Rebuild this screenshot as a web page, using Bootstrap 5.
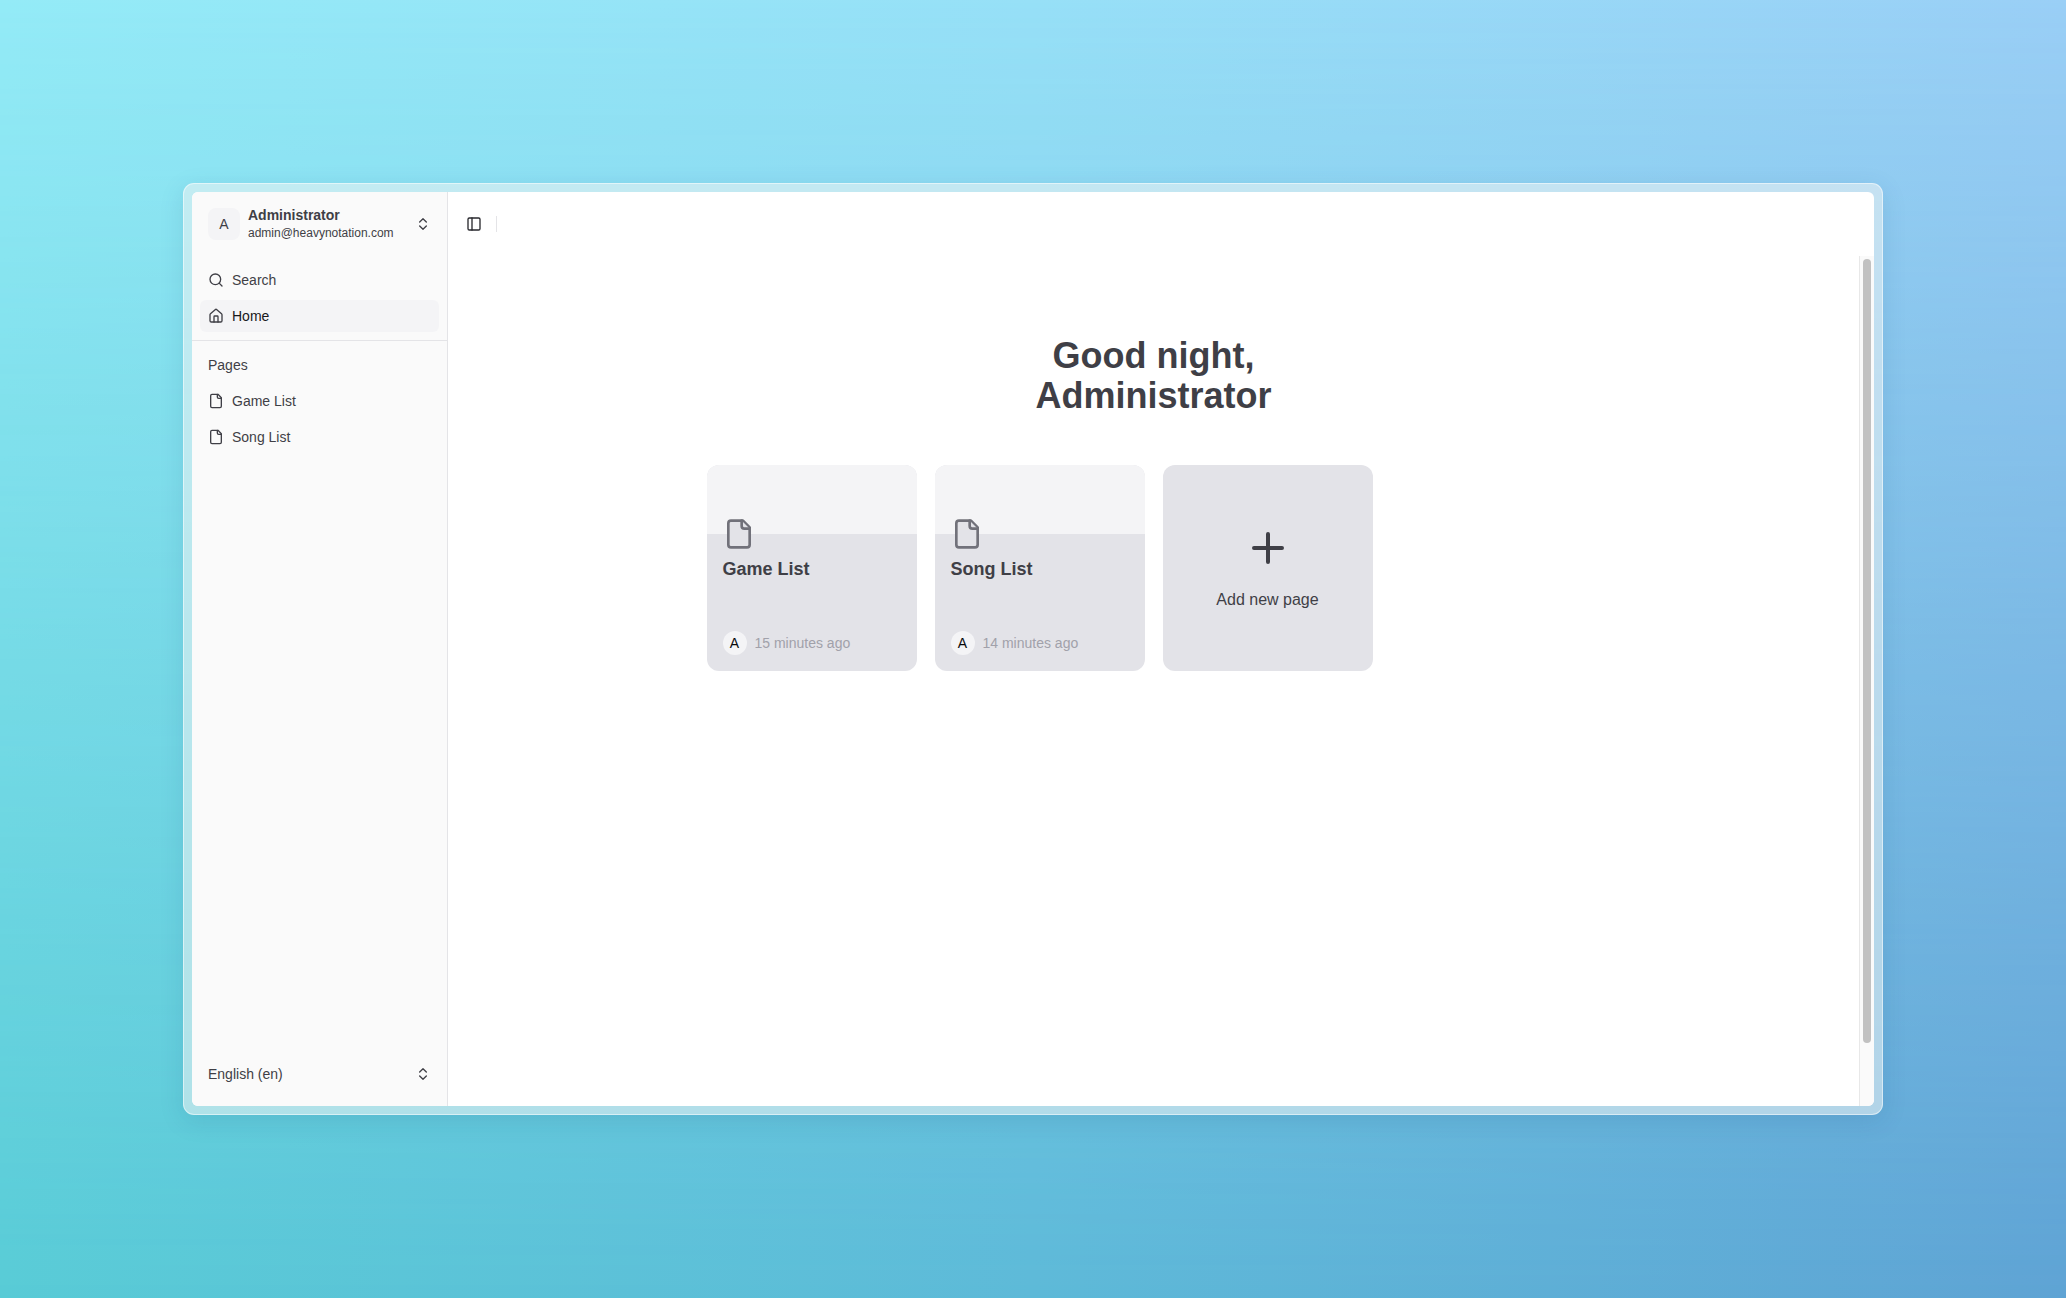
<!DOCTYPE html>
<html lang="en">
<head>
<meta charset="utf-8">
<title>Home</title>
<link href="https://cdn.jsdelivr.net/npm/bootstrap@5.3.0/dist/css/bootstrap.min.css" rel="stylesheet">
<style>
body{height:100vh;overflow:hidden;font-family:"Liberation Sans",Arial,sans-serif;font-size:14px;line-height:20px;color:#3f3f46;background:linear-gradient(90deg,#94ebf7,#97e0f7 50%,#9acff6)}
.backdrop-low{position:absolute;inset:0;z-index:-1;background:linear-gradient(90deg,#58cbd6,#5db9d8 50%,#5ea3d4);-webkit-mask-image:linear-gradient(#0000,#000);mask-image:linear-gradient(#0000,#000)}
.shell{width:1700px;height:932px;padding:8px;border:1px solid rgba(255,255,255,.5);border-radius:11px;background:rgba(238,242,243,.56);box-shadow:0 6px 24px rgba(20,80,120,.13)}
.window{border-radius:6px;background:#fff}
.side{width:256px;background:#fafafa;border-right:1px solid #e4e4e7}
svg{fill:none;stroke:currentColor;stroke-width:2;stroke-linecap:round;stroke-linejoin:round;flex:none;display:block}
.user{height:48px}
.ava{width:32px;height:32px;border-radius:8px;background:#f4f4f6}
.item{height:32px;border-radius:6px;padding:0 8px;gap:8px;color:#3f3f46;text-decoration:none}
.item.current{background:#f4f4f6;color:#18181b}
.item svg{color:#3f3f46}
.email{font-size:12px;line-height:16px}
.name{line-height:17px;margin-top:-1px;padding-bottom:1px}
.rule{height:1px;background:#e4e4e7}
.topbar{height:64px;padding:0 18px;gap:14px;color:#29292e}
.sep{width:1px;height:16px;background:#e4e4e7}
.greet{font-size:36px;line-height:40px;font-weight:700;padding-top:80px;margin:0}
.tiles{width:894px;margin:49px auto 0;gap:18px}
.tile{width:210px;height:206px;border-radius:12px;background:#e3e3e8;overflow:hidden}
.cover{height:69px;background:#f4f4f6}
.tile-body{padding:0 16px 16px;margin-top:-16px}
.tile-body>svg{color:#71717a;fill:#e3e3e8}
.tile-name{font-size:18px;line-height:28px;font-weight:700;margin-top:5px}
.dot{width:24px;height:24px;background:#f4f4f6;color:#09090b}
.ago{color:#a1a1aa}
.track{width:15px;background:#fafafa;border-left:1px solid #e8e8e8;padding:3px 3px 0}
.thumb{width:8px;height:784px;border-radius:4px;background:#c1c1c1}
</style>
<script src="https://cdn.jsdelivr.net/npm/bootstrap@5.3.0/dist/js/bootstrap.bundle.min.js"></script>
</head>
<body class="d-flex align-items-center justify-content-center">
<div class="backdrop-low"></div>
<svg width="0" height="0" class="position-absolute">
<symbol id="file" viewBox="0 0 24 24"><path d="M15 2H6a2 2 0 0 0-2 2v16a2 2 0 0 0 2 2h12a2 2 0 0 0 2-2V7Z"/><path d="M14 2v4a2 2 0 0 0 2 2h4"/></symbol>
<symbol id="updown" viewBox="0 0 24 24"><path d="m7 15 5 5 5-5"/><path d="m7 9 5-5 5 5"/></symbol>
</svg>
<div class="shell">
<div class="window d-flex h-100 overflow-hidden">
<aside class="side d-flex flex-column flex-shrink-0">
<div class="p-2">
<div class="user d-flex align-items-center gap-2 px-2">
<span class="ava d-flex align-items-center justify-content-center">A</span>
<div class="flex-grow-1"><div class="name fw-bold">Administrator</div><div class="email">admin@heavynotation.com</div></div>
<svg width="16" height="16"><use href="#updown"/></svg>
</div>
</div>
<nav class="d-flex flex-column gap-1 p-2">
<a class="item d-flex align-items-center"><svg width="16" height="16" viewBox="0 0 24 24"><circle cx="11" cy="11" r="8"/><path d="m21 21-4.3-4.3"/></svg>Search</a>
<a class="item current d-flex align-items-center"><svg width="16" height="16" viewBox="0 0 24 24"><path d="M15 21v-8a1 1 0 0 0-1-1h-4a1 1 0 0 0-1 1v8"/><path d="M3 10a2 2 0 0 1 .709-1.528l7-5.999a2 2 0 0 1 2.582 0l7 5.999A2 2 0 0 1 21 10v9a2 2 0 0 1-2 2H5a2 2 0 0 1-2-2z"/></svg>Home</a>
</nav>
<div class="rule"></div>
<div class="d-flex flex-column gap-1 p-2 flex-grow-1">
<div class="item d-flex align-items-center">Pages</div>
<a class="item d-flex align-items-center"><svg width="16" height="16"><use href="#file"/></svg>Game List</a>
<a class="item d-flex align-items-center"><svg width="16" height="16"><use href="#file"/></svg>Song List</a>
</div>
<div class="p-2">
<div class="user d-flex align-items-center justify-content-between px-2">English (en)<svg width="16" height="16"><use href="#updown"/></svg></div>
</div>
</aside>
<main class="flex-grow-1 d-flex flex-column">
<div class="topbar d-flex align-items-center">
<svg width="16" height="16" viewBox="0 0 24 24"><rect width="18" height="18" x="3" y="3" rx="2"/><path d="M9 3v18"/></svg>
<span class="sep"></span>
</div>
<div class="d-flex flex-grow-1">
<div class="flex-grow-1">
<h1 class="greet text-center">Good night,<br>Administrator</h1>
<div class="tiles d-flex">
<div class="tile d-flex flex-column"><div class="cover"></div>
<div class="tile-body d-flex flex-column flex-grow-1"><svg width="32" height="32"><use href="#file"/></svg><div class="tile-name">Game List</div>
<div class="d-flex align-items-center gap-2 mt-auto"><span class="dot rounded-circle d-flex align-items-center justify-content-center">A</span><span class="ago">15 minutes ago</span></div></div></div>
<div class="tile d-flex flex-column"><div class="cover"></div>
<div class="tile-body d-flex flex-column flex-grow-1"><svg width="32" height="32"><use href="#file"/></svg><div class="tile-name">Song List</div>
<div class="d-flex align-items-center gap-2 mt-auto"><span class="dot rounded-circle d-flex align-items-center justify-content-center">A</span><span class="ago">14 minutes ago</span></div></div></div>
<div class="tile d-flex flex-column align-items-center justify-content-center fs-6"><svg width="48" height="48" viewBox="0 0 24 24"><path d="M5 12h14M12 5v14"/></svg><span class="mt-3 lh-base">Add new page</span></div>
</div>
</div>
<div class="track"><div class="thumb"></div></div>
</div>
</main>
</div>
</div>
</body>
</html>
